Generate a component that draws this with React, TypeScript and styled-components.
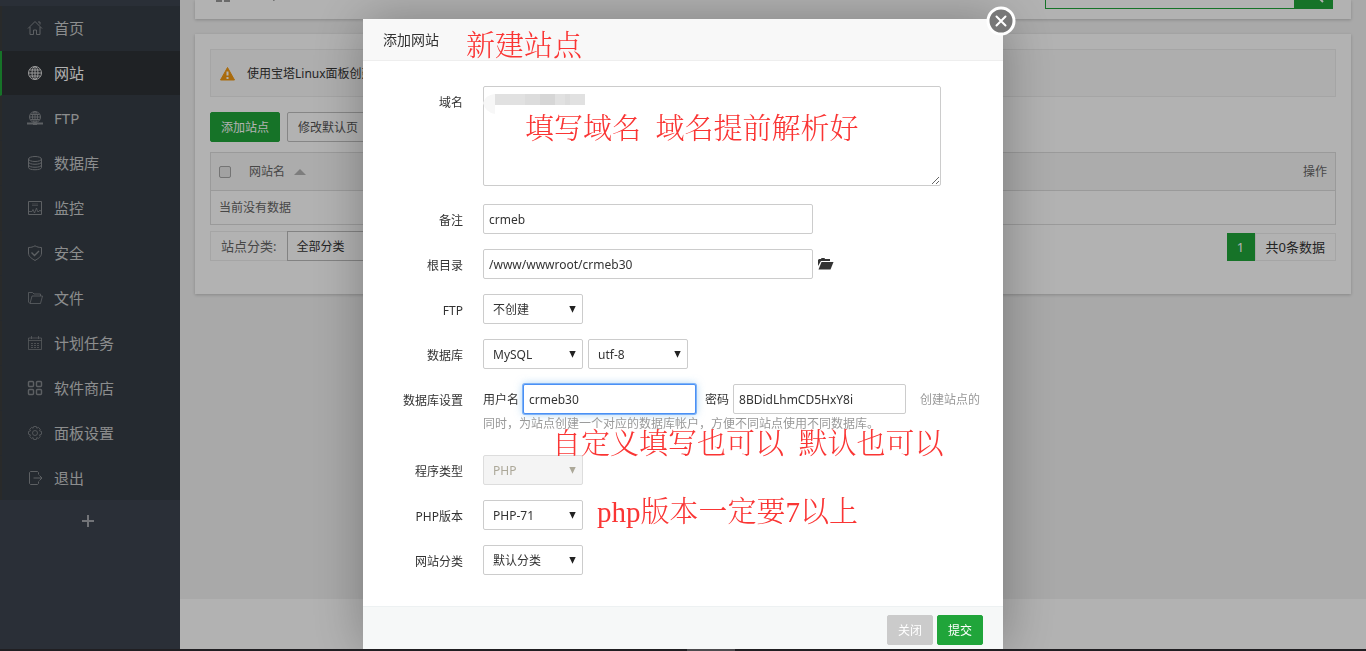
import React from "react";
import styled, { createGlobalStyle, css } from "styled-components";

const GlobalStyle = createGlobalStyle`
  * { box-sizing: border-box; }
  body {
    margin: 0;
    color: #333;
    font: 12px/18px "Noto Sans", "Noto Sans CJK SC", sans-serif;
  }
  button, input, select, textarea { font: inherit; color: inherit; }
  a { color: inherit; text-decoration: none; }
`;

const Page = styled.div`
  display: flex;
  flex-direction: column;
  min-height: 100vh;
`;
const Shell = styled.div`
  display: flex;
  flex: 1;
`;
const TaskStrip = styled.div`
  position: relative;
  z-index: 3;
  display: flex;
  justify-content: center;
  height: 2px;
  background: #201f22;
`;
const TaskMark = styled.span`
  width: 48px;
  margin-left: 56px;
  background: #4c4b4e;
`;

/* Sidebar */
const Sidebar = styled.nav`
  flex: none;
  width: 180px;
  padding-top: 6px;
  background: #3d444f;
`;
const MenuList = styled.ul`
  margin: 0;
  padding: 0;
  list-style: none;
  background: #363d45;
`;
const MenuLink = styled.a<{ $active?: boolean }>`
  display: flex;
  align-items: center;
  gap: 11px;
  height: 45px;
  padding-left: 25px;
  border-left: 2px solid #3b3d3d;
  border-bottom: 1px solid #363d45;
  color: #c9cbcc;
  font-size: 15px;
  line-height: 24px;
  svg { color: #868a8f; }
  ${(p) =>
    p.$active &&
    css`
      background: #2d3136;
      border-left-color: #20a53a;
      color: #fff;
      svg { color: #dddddd; }
    `}
`;
const MenuItem = styled.li`
  &:last-child a { height: 44px; border-bottom: 0; }
`;
const AddMenu = styled.button`
  display: flex;
  align-items: center;
  justify-content: center;
  width: 100%;
  height: 41px;
  padding: 0 5px 0 0;
  border: 0;
  background: none;
  color: #a4a7ac;
`;

/* Main page */
const Main = styled.main`
  display: flex;
  flex: 1;
  flex-direction: column;
  min-width: 0;
`;
const Content = styled.div`
  display: flex;
  flex: 1;
  flex-direction: column;
  gap: 15px;
  padding: 0 15px;
  background: #f2f2f2;
`;
const PageFooter = styled.footer`
  height: 50px;
  background: #fff;
`;
const Card = styled.section`
  padding: 15px 15px 33px;
  background: #fff;
  box-shadow: 0 1px 3px rgba(0, 0, 0, 0.2);
`;
const CrumbBar = styled.header`
  display: flex;
  align-items: flex-end;
  justify-content: space-between;
  height: 19px;
  padding: 0 18px 10px 20px;
  overflow: hidden;
  background: #fff;
  box-shadow: 0 1px 3px rgba(0, 0, 0, 0.2);
`;
const CrumbIcon = styled.svg`
  margin-bottom: 7px;
`;
const Search = styled.form`
  display: flex;
  height: 32px;
`;
const SearchInput = styled.input`
  width: 249px;
  padding: 0 8px;
  border: 1px solid #20a53a;
  border-right: 0;
  background: #fff;
`;
const SearchButton = styled.button`
  display: flex;
  align-items: center;
  justify-content: center;
  width: 39px;
  padding: 0;
  border: 0;
  background: #20a53a;
  color: #fff;
`;
const Notice = styled.div`
  display: flex;
  align-items: center;
  gap: 12px;
  height: 48px;
  padding: 2px 9px 0;
  border: 1px solid #ececec;
  background: #fafafa;
`;
const Tools = styled.div`
  display: flex;
  gap: 7px;
  padding: 15px 0 10px;
`;
const Button = styled.button<{ $tone: "green" | "plain" | "grey" }>`
  height: 30px;
  padding: 2px 10px 0;
  border: 1px solid #c0c0c0;
  border-radius: 2px;
  background: #fff;
  color: #555;
  ${(p) =>
    p.$tone !== "plain" &&
    css`
      border-color: ${p.$tone === "green" ? "#20a53a" : "#cbcbcb"};
      background: ${p.$tone === "green" ? "#20a53a" : "#cbcbcb"};
      color: #fff;
    `}
`;
const SiteTable = styled.table`
  width: 100%;
  border: 1px solid #ddd;
  border-collapse: collapse;
  color: #666;
  th {
    height: 38px;
    padding: 0 8px;
    border-bottom: 1px solid #ddd;
    background: #f6f6f6;
    font-weight: 400;
    text-align: left;
  }
  th:last-child { text-align: right; }
  td { height: 34px; padding: 0 8px; }
`;
const HeadCell = styled.div`
  display: flex;
  align-items: center;
`;
const TickBox = styled.input`
  appearance: none;
  width: 12px;
  height: 12px;
  margin: 0 18px 0 0;
  border: 1px solid #a6a6a6;
  border-radius: 2px;
  background: #e8e8e8;
`;
const SortMark = styled.svg`
  margin-left: 9px;
`;
const TableFooter = styled.div`
  display: flex;
  align-items: flex-end;
  justify-content: space-between;
  padding-top: 6px;
`;
const Filter = styled.div`
  display: flex;
  height: 30px;
  color: #666;
`;
const FilterLabel = styled.label`
  padding: 0 11px 0 10px;
  border: 1px solid #ececec;
  border-right: 0;
  font-size: 13px;
  line-height: 28px;
`;
const FilterSelect = styled.select`
  appearance: none;
  width: 110px;
  padding: 2px 8px 0;
  border: 1px solid #bbb;
  border-radius: 0;
  background: #fff;
  color: #333;
`;
const Pager = styled.div`
  display: flex;
  height: 28px;
  font-size: 13px;
  line-height: 26px;
`;
const PageNumber = styled.span`
  width: 28px;
  background: #20a53a;
  color: #fff;
  line-height: 28px;
  text-align: center;
`;
const PageTotal = styled.span`
  padding: 0 10px;
  border: 1px solid #ececec;
`;

/* Dialog */
const Backdrop = styled.div`
  position: fixed;
  inset: 0;
  z-index: 2;
  display: flex;
  align-items: flex-start;
  justify-content: center;
  padding-top: 19px;
  background: rgba(0, 0, 0, 0.3);
`;
const Dialog = styled.div`
  position: relative;
  width: 640px;
  max-width: 100%;
  background: #fff;
  box-shadow: 1px 1px 50px rgba(0, 0, 0, 0.3);
`;
const DialogTitle = styled.h2`
  height: 42px;
  margin: 0;
  padding-left: 20px;
  border-bottom: 1px solid #eee;
  background: #f8f8f8;
  font-size: 14px;
  font-weight: 400;
  line-height: 42px;
`;
const CloseButton = styled.button`
  position: absolute;
  top: -13px;
  right: -13px;
  width: 30px;
  height: 30px;
  padding: 0;
  border: 0;
  border-radius: 50%;
  background: none;
  svg { display: block; }
`;
const DialogForm = styled.form`
  margin: 0;
`;
const Fields = styled.div`
  display: flex;
  flex-direction: column;
  gap: 15px;
  padding: 25px 20px 31px 0;
`;
const Row = styled.div<{ $space?: number }>`
  display: flex;
  gap: 20px;
  padding-bottom: ${(p) => p.$space || 0}px;
`;
const RowLabel = styled.label`
  flex: none;
  width: 100px;
  height: 30px;
  line-height: 34px;
  text-align: right;
`;
const RowBody = styled.div`
  position: relative;
  display: flex;
  align-items: center;
  flex: 1;
  gap: 5px;
`;
const InlineBody = styled.div`
  flex: 1;
  line-height: 17px;
  input { vertical-align: middle; }
`;
const field = css`
  border: 1px solid #ccc;
  border-radius: 2px;
  background: #fff;
  outline: 0;
`;
const TextArea = styled.textarea`
  ${field}
  display: block;
  width: 458px;
  height: 100px;
  padding: 5px;
`;
const TextInput = styled.input<{ $width: number; $focused?: boolean }>`
  ${field}
  width: ${(p) => p.$width}px;
  height: 30px;
  padding: 0 5px;
  ${(p) =>
    p.$focused &&
    css`
      border-color: #4a90f5;
      box-shadow: 0 0 0 1px #7db2f7, 0 0 8px rgba(102, 175, 233, 0.6);
    `}
`;
const PairLabel = styled.label<{ $lead?: number }>`
  display: inline-block;
  margin-left: ${(p) => p.$lead || 0}px;
  padding-right: 4px;
  vertical-align: middle;
`;
const Hint = styled.span`
  margin-left: 14px;
  color: #999;
  vertical-align: middle;
`;
const SelectBox = styled.span`
  position: relative;
  width: 100px;
  svg {
    position: absolute;
    top: 12px;
    right: 7px;
    pointer-events: none;
  }
`;
const Select = styled.select`
  ${field}
  display: block;
  appearance: none;
  width: 100%;
  height: 30px;
  padding: 2px 9px 0;
  &:disabled {
    border-color: #ddd;
    background: #f4f4f4;
    color: #aca899;
    opacity: 1;
  }
`;
const Folder = styled.button`
  display: flex;
  padding: 0;
  border: 0;
  background: none;
  color: #333;
`;
const DialogFooter = styled.div`
  display: flex;
  justify-content: flex-end;
  gap: 4px;
  height: 43px;
  padding: 8px 20px 0;
  border-top: 1px solid #edf1f2;
  background: #f6f8f8;
`;
const Mosaic = styled.svg`
  position: absolute;
  top: 8px;
  left: 0;
`;
const Note = styled.span<{ $x: number; $y: number }>`
  position: absolute;
  left: ${(p) => p.$x}px;
  top: ${(p) => p.$y}px;
  color: #fa3534;
  font: 300 29px/36px "Liberation Serif", "Noto Serif CJK SC", "Noto Sans CJK SC", serif;
  white-space: pre;
  pointer-events: none;
`;

const icons: Record<string, React.ReactNode> = {
  home: <path d="M1 8.5 8 1.5l7 7M3 7v7.5h3.5V10h3v4.5H13V7M11 2h2v2.5" />,
  globe: (
    <>
      <circle cx="8" cy="8" r="6.5" />
      <ellipse cx="8" cy="8" rx="3" ry="6.5" />
      <path d="M8 1.5v13M1.5 8h13M2.5 5h11M2.5 11h11" />
    </>
  ),
  ftp: (
    <>
      <circle cx="8" cy="7" r="5.5" />
      <ellipse cx="8" cy="7" rx="2.5" ry="5.5" />
      <path d="M8 1.5v11M2.5 7h11M3.5 4.5h9M3.5 9.5h9" />
      <path d="M0 13.5h16M6 14h4" strokeWidth="2" />
    </>
  ),
  database: (
    <>
      <ellipse cx="8" cy="4" rx="6.5" ry="2.5" />
      <path d="M1.5 4v8.5c0 3 13 3 13 0V4M1.5 7c0 3 13 3 13 0M1.5 10c0 3 13 3 13 0" />
    </>
  ),
  monitor: (
    <>
      <path d="M1.5 1.5h13v13h-13z" />
      <path d="M5 4h6M5 5.500h6" strokeOpacity=".5" />
      <path d="M2 11.500h3l1-2 1.500 3.500 2-5 1 3.500h1.500l1-1.500 1 1.500" strokeOpacity=".8" />
    </>
  ),
  shield: (
    <>
      <path d="M8 .8C6 2 4 2.500 1.500 2.500v5.500c0 4 3.500 5.500 6.500 7.500 3-2 6.500-3.500 6.500-7.500V2.500C12 2.500 10 2 8 .8z" />
      <path d="m4.500 7.500 3 3 4.500-4.500" strokeWidth="1.4" />
    </>
  ),
  folder: <path d="M3 13.500 1.500 12V2.500h4l1.500 1.500h6.500V6M3 13.500h10.500L15.500 6H5z" strokeOpacity=".8" />,
  calendar: (
    <>
      <path d="M1.500 3h13v11.500h-13zM1.500 5.500h13M4.500 1v3M11.500 1v3" strokeOpacity=".7" />
      <path d="M4 8.500h8M4 10.500h8M4 12.500h8" strokeDasharray="2 1" strokeOpacity=".7" />
    </>
  ),
  apps: (
    <g strokeWidth="1.4">
      <rect x="1.500" y="1.500" width="5" height="5" rx="1" />
      <rect x="9.500" y="1.500" width="5" height="5" rx="1" />
      <rect x="1.500" y="9.500" width="5" height="5" rx="1" />
      <rect x="9.500" y="9.500" width="5" height="5" rx="1" />
    </g>
  ),
  gear: (
    <g strokeOpacity=".8">
      <circle cx="8" cy="8" r="2.500" />
      <path d="M6.700 1.500h2.600l.5 1.700 1.600-.8 1.900 1.900-.8 1.500 2 .7v2.700l-2 .7.8 1.600-1.900 1.900-1.600-.8-.5 1.900H6.700l-.6-1.900-1.500.8-1.900-1.900.8-1.600-2-.7V6.500l2-.7-.8-1.500 1.900-1.900 1.500.8z" />
    </g>
  ),
  exit: <path d="M11.500 4.500v-2l-1-1h-7l-1 1v11l1 1h7l1-1v-2M6.500 8h8.500M12.500 5.500 15 8l-2.500 2.500" />,
};

const menu = [
  ["首页", "home"],
  ["网站", "globe"],
  ["FTP", "ftp"],
  ["数据库", "database"],
  ["监控", "monitor"],
  ["安全", "shield"],
  ["文件", "folder"],
  ["计划任务", "calendar"],
  ["软件商店", "apps"],
  ["面板设置", "gear"],
  ["退出", "exit"],
];

function Picker({ id, value, label, disabled }: { id: string; value: string; label?: string; disabled?: boolean }) {
  return (
    <SelectBox>
      <Select id={id} aria-label={label} disabled={disabled} defaultValue={value}>
        <option>{value}</option>
      </Select>
      <svg width="7" height="7" viewBox="0 0 7 7" aria-hidden="true">
        <path d="M.3 0h6.400L3.500 6.800z" fill={disabled ? "#aca899" : "#222"} />
      </svg>
    </SelectBox>
  );
}

function MenuIcon({ name }: { name: string }) {
  return (
    <svg width="16" height="16" viewBox="0 0 16 16" fill="none" stroke="currentColor" aria-hidden="true">
      {icons[name]}
    </svg>
  );
}

export default function App() {
  return (
    <Page>
      <GlobalStyle />
      <Shell>
        <Sidebar>
          <MenuList>
            {menu.map(([text, icon]) => (
              <MenuItem key={text}>
                <MenuLink href="#" $active={icon === "globe"}>
                  <MenuIcon name={icon} />
                  {text}
                </MenuLink>
              </MenuItem>
            ))}
          </MenuList>
          <AddMenu type="button" aria-label="添加菜单">
            <svg width="14" height="14" viewBox="0 0 14 14" stroke="currentColor" strokeWidth="2">
              <path d="M7 1v12M1 7h12" />
            </svg>
          </AddMenu>
        </Sidebar>
        <Main>
          <Content>
            <CrumbBar>
              <CrumbIcon width="62" height="14" viewBox="0 0 62 14" fill="none" stroke="#999" aria-hidden="true">
                <path d="M2 8h4v5H2zM10 8h4v5h-4z" strokeWidth="2" />
                <path d="m60 11-1.500 2" stroke="#777" />
              </CrumbIcon>
              <Search>
                <SearchInput type="text" aria-label="搜索" />
                <SearchButton type="button" aria-label="搜索">
                  <svg width="20" height="20" viewBox="0 0 20 20" fill="none" stroke="currentColor" strokeWidth="2">
                    <circle cx="9" cy="9" r="5" />
                    <path d="m13 13 6 6" />
                  </svg>
                </SearchButton>
              </Search>
            </CrumbBar>
            <Card>
              <Notice>
                <svg width="15" height="14" viewBox="0 0 15 14" aria-hidden="true">
                  <path d="M7.500.500 14.500 13H.500z" fill="#f39a13" stroke="#f39a13" strokeLinejoin="round" />
                  <path d="M7.500 4.500v4M7.500 10v2" stroke="#fff" strokeWidth="2" />
                </svg>
                <span>使用宝塔Linux面板创建站点</span>
              </Notice>
              <Tools>
                <Button type="button" $tone="green">添加站点</Button>
                <Button type="button" $tone="plain">修改默认页</Button>
              </Tools>
              <SiteTable>
                <thead>
                  <tr>
                    <th>
                      <HeadCell>
                        <TickBox type="checkbox" aria-label="全选" />
                        网站名
                        <SortMark width="12" height="6" viewBox="0 0 12 6" aria-hidden="true">
                          <path d="M6 0l6 6H0z" fill="#b4b4b4" />
                        </SortMark>
                      </HeadCell>
                    </th>
                    <th>操作</th>
                  </tr>
                </thead>
                <tbody>
                  <tr>
                    <td colSpan={2}>当前没有数据</td>
                  </tr>
                </tbody>
              </SiteTable>
              <TableFooter>
                <Filter>
                  <FilterLabel htmlFor="site-type">站点分类:</FilterLabel>
                  <FilterSelect id="site-type">
                    <option>全部分类</option>
                  </FilterSelect>
                </Filter>
                <Pager>
                  <PageNumber>1</PageNumber>
                  <PageTotal>共0条数据</PageTotal>
                </Pager>
              </TableFooter>
            </Card>
          </Content>
          <PageFooter />
        </Main>
      </Shell>
      <TaskStrip>
        <TaskMark />
      </TaskStrip>

      <Backdrop>
        <Dialog role="dialog" aria-labelledby="dialog-title">
          <DialogTitle id="dialog-title">添加网站</DialogTitle>
          <DialogForm>
            <Fields>
              <Row $space={3}>
                <RowLabel htmlFor="domain">域名</RowLabel>
                <RowBody>
                  <TextArea id="domain" />
                  <Mosaic width="102" height="20" viewBox="0 0 102 20" aria-hidden="true">
                    <path d="M12 0Q2 1 0 9q2 9 12 11z" fill="#f7f7f7" />
                    <path d="M12 0h90v11H12z" fill="#e1e1e1" />
                    <path d="M57 0h15v11H57z" fill="#d6d6d6" />
                    <path d="M42 0h15v11H42zM82 0h5v11h-5z" fill="#dcdcdc" />
                  </Mosaic>
                </RowBody>
              </Row>
              <Row>
                <RowLabel htmlFor="remark">备注</RowLabel>
                <RowBody>
                  <TextInput id="remark" type="text" defaultValue="crmeb" $width={330} />
                </RowBody>
              </Row>
              <Row>
                <RowLabel htmlFor="root-dir">根目录</RowLabel>
                <RowBody>
                  <TextInput id="root-dir" type="text" defaultValue="/www/wwwroot/crmeb30" $width={330} />
                  <Folder type="button" aria-label="选择目录">
                    <svg width="16" height="12" viewBox="0 0 16 12" fill="currentColor">
                      <path d="M0 8V2l1-1h2l.5-1h3L7 1h5v2H3z" />
                      <path d="M3.500 4H15.500L12.500 11.500H.500z" />
                    </svg>
                  </Folder>
                </RowBody>
              </Row>
              <Row>
                <RowLabel htmlFor="ftp">FTP</RowLabel>
                <RowBody>
                  <Picker id="ftp" value="不创建" />
                </RowBody>
              </Row>
              <Row>
                <RowLabel htmlFor="db">数据库</RowLabel>
                <RowBody>
                  <Picker id="db" value="MySQL" />
                  <Picker id="charset" value="utf-8" label="编码" />
                </RowBody>
              </Row>
              <Row $space={8}>
                <RowLabel htmlFor="db-user">数据库设置</RowLabel>
                <InlineBody>
                  <PairLabel htmlFor="db-user">用户名</PairLabel>
                  <TextInput id="db-user" type="text" defaultValue="crmeb30" $width={173} $focused />
                  <PairLabel htmlFor="db-pass" $lead={9}>密码</PairLabel>
                  <TextInput id="db-pass" type="text" defaultValue="8BDidLhmCD5HxY8i" $width={173} />
                  <Hint>创建站点的同时，为站点创建一个对应的数据库帐户，方便不同站点使用不同数据库。</Hint>
                </InlineBody>
              </Row>
              <Row>
                <RowLabel htmlFor="kind">程序类型</RowLabel>
                <RowBody>
                  <Picker id="kind" value="PHP" disabled />
                </RowBody>
              </Row>
              <Row>
                <RowLabel htmlFor="php">PHP版本</RowLabel>
                <RowBody>
                  <Picker id="php" value="PHP-71" />
                </RowBody>
              </Row>
              <Row>
                <RowLabel htmlFor="category">网站分类</RowLabel>
                <RowBody>
                  <Picker id="category" value="默认分类" />
                </RowBody>
              </Row>
            </Fields>
            <DialogFooter>
              <Button type="button" $tone="grey">关闭</Button>
              <Button type="button" $tone="green">提交</Button>
            </DialogFooter>
          </DialogForm>
          <CloseButton type="button" aria-label="关闭">
            <svg width="30" height="30" viewBox="0 0 30 30">
              <circle cx="15" cy="15" r="13" fill="#777" stroke="#fff" strokeWidth="3" />
              <path d="m10.500 10.500 9 9m0-9-9 9" stroke="#fff" strokeWidth="2" strokeLinecap="round" />
            </svg>
          </CloseButton>
          <Note $x={103} $y={9}>新建站点</Note>
          <Note $x={162} $y={92}>填写域名  域名提前解析好</Note>
          <Note $x={189} $y={407}>自定义填写也可以  默认也可以</Note>
          <Note $x={234} $y={475}>php版本一定要7以上</Note>
        </Dialog>
      </Backdrop>
    </Page>
  );
}
